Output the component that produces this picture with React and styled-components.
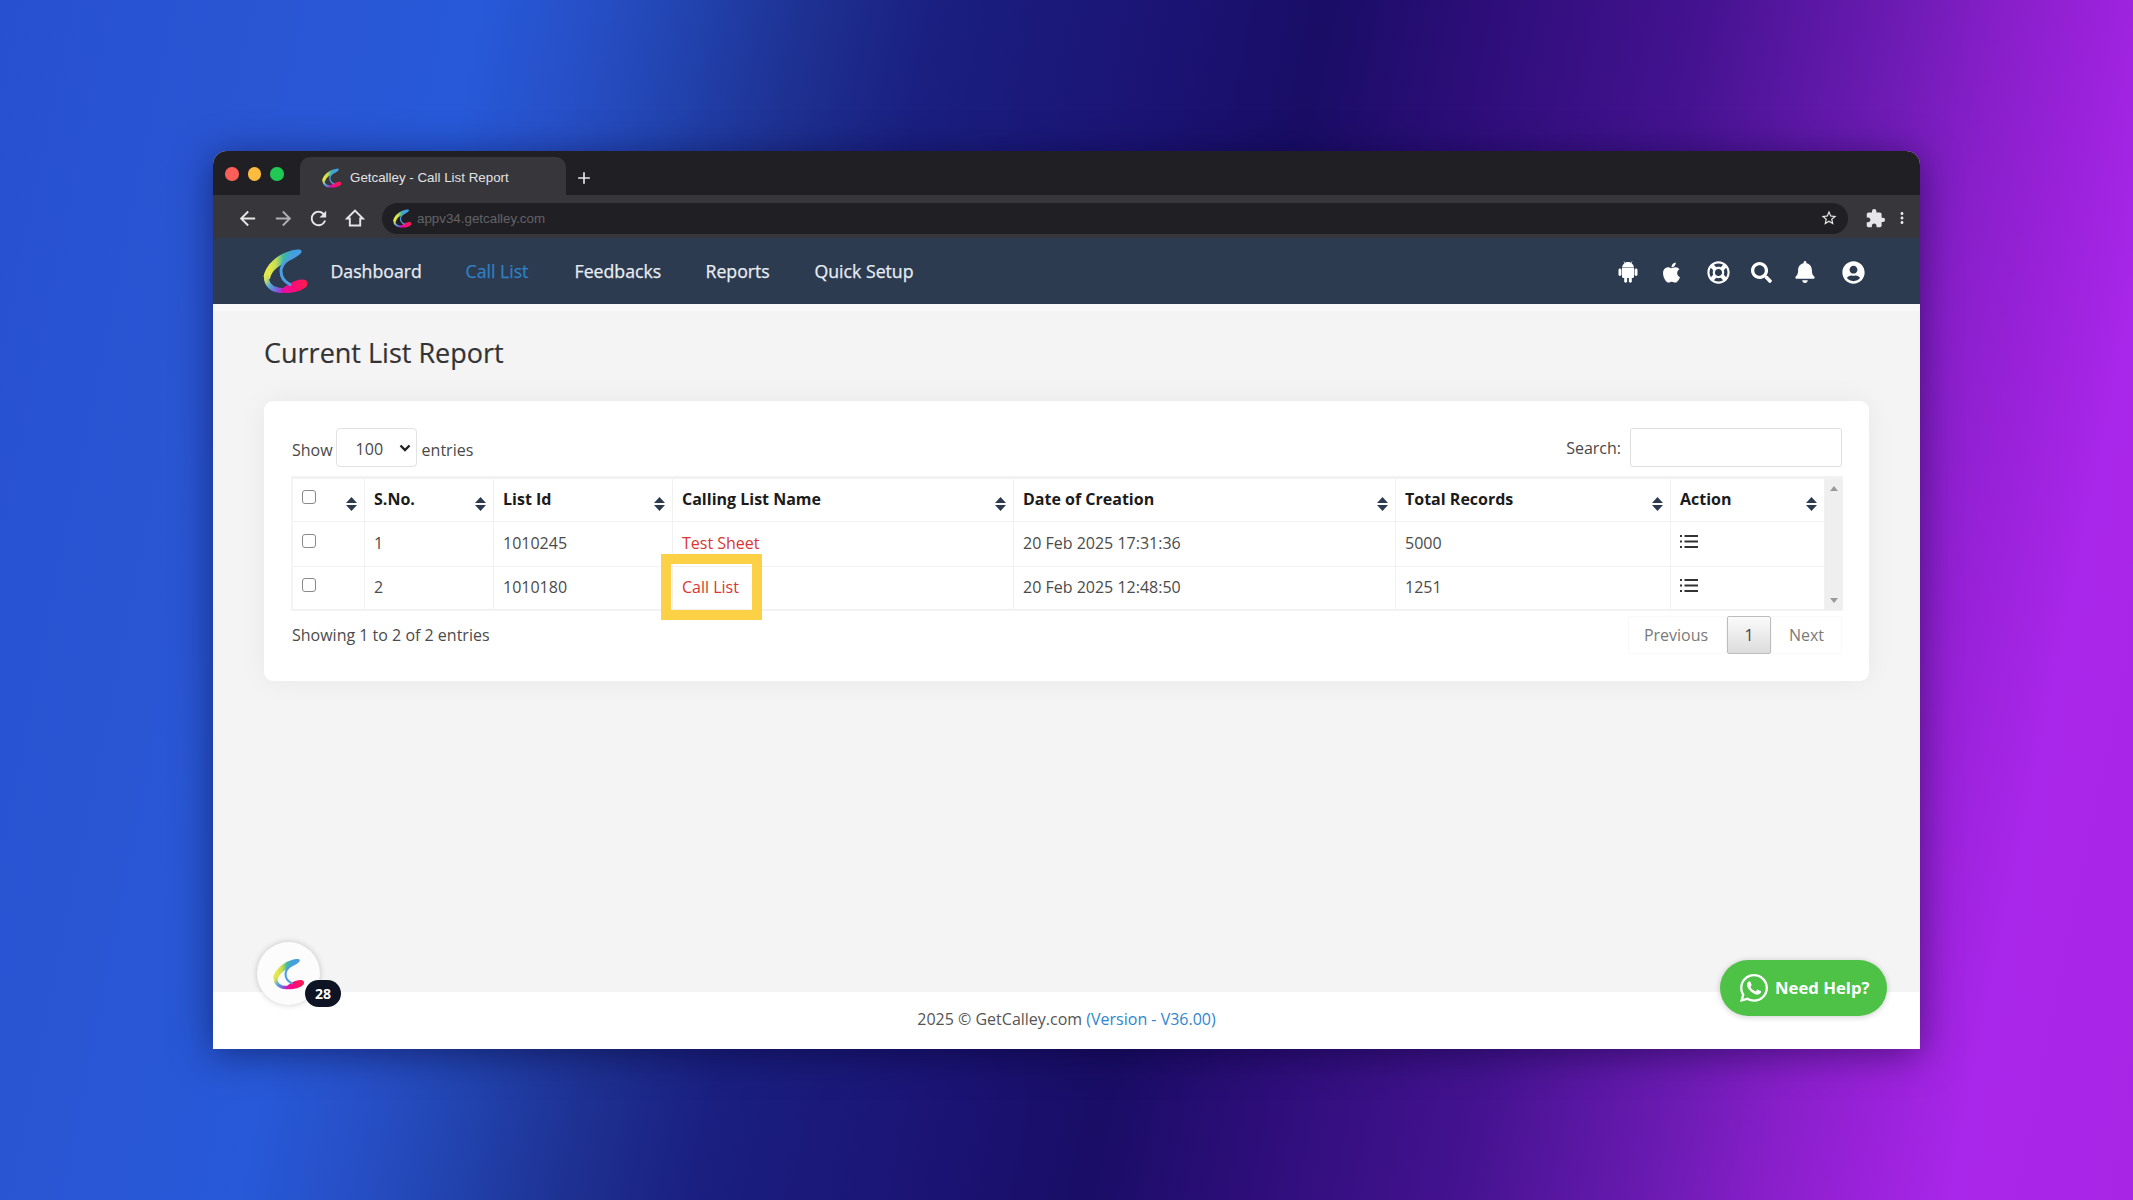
import React from "react";
import styled, { createGlobalStyle } from "styled-components";
import { FaApple, FaSearch, FaBell, FaUserCircle, FaRegLifeRing, FaWhatsapp } from "react-icons/fa";
import { MdArrowBack, MdArrowForward, MdRefresh, MdStarBorder, MdMoreVert, MdExtension, MdAdd } from "react-icons/md";

const Global = createGlobalStyle`
  *, *::before, *::after { box-sizing: border-box; }
  html, body { margin: 0; }
  body { font-family: "Open Sans", "Noto Sans", sans-serif; font-size: 16px; color: #555; }
`;

const Backdrop = styled.div`
  width: 2133px;
  height: 1200px;
  padding: 151px 213px 0 213px;
  overflow: hidden;
  background: linear-gradient(101.5deg, #2650cf 0%, #2a56d4 12%, #2759d8 20.3%, #2750c8 24.5%, #2244b0 28.8%, #1e3192 34%, #1a1f80 39.5%, #1b1475 48.7%, #190d66 55.8%, #2e0e7a 63%, #451391 72%, #6c1bb3 80%, #881fca 84.5%, #9a22da 88.5%, #a927ea 92.5%, #a925e6 100%);
`;

const Window = styled.main`
  width: 1707px;
  height: 898px;
  display: flex;
  flex-direction: column;
  border-radius: 14px 14px 0 0;
  background: #f4f4f4;
  box-shadow: 0 5px 38px rgba(5, 0, 40, 0.5);
`;

const TabStrip = styled.header`
  height: 44px;
  flex: none;
  display: flex;
  align-items: flex-end;
  padding-left: 12px;
  background: #202024;
  border-radius: 14px 14px 0 0;
`;

const Lights = styled.div`
  display: flex;
  gap: 9px;
  width: 75px;
  padding-bottom: 14.5px;
`;

const Light = styled.i`
  width: 13.5px;
  height: 13.5px;
  border-radius: 50%;
  background: ${(p) => p.$color};
`;

const Tab = styled.div`
  width: 266px;
  height: 38px;
  padding: 4px 0 0 22px;
  display: flex;
  align-items: center;
  border-radius: 10px 10px 0 0;
  background: #36363b;
  color: #e2e2e4;
  font: 13.35px "Liberation Sans", Arial, sans-serif;
  line-height: 34px;
  svg { margin-right: 8px; }
`;

const NewTab = styled.div`
  height: 34px;
  margin-left: 8px;
  display: flex;
  align-items: center;
  color: #e8e8e8;
`;

const Toolbar = styled.div`
  height: 43px;
  flex: none;
  display: flex;
  align-items: center;
  padding: 3px 9px 0 23px;
  background: #36363b;
  color: #e6e6e8;
`;

const ToolIcon = styled.span`
  width: ${(p) => p.$w}px;
  padding-left: ${(p) => p.$pad || 0}px;
  display: flex;
  flex: none;
  align-items: center;
`;

const Address = styled.div`
  flex: 1;
  height: 31px;
  display: flex;
  align-items: center;
  padding: 0 10px 0 11px;
  border-radius: 16px;
  background: #202024;
  color: #626267;
  font: 13.35px "Liberation Sans", Arial, sans-serif;
  svg:first-child { margin-right: 5px; }
  svg:last-child { margin-left: auto; color: #e6e6e8; }
`;

const NavBar = styled.nav`
  height: 66px;
  flex: none;
  display: flex;
  align-items: center;
  padding: 0 55px 0 50px;
  background: #2c3b50;
`;

const NavLinks = styled.div`
  display: flex;
  flex: 1;
  padding: 0 0 1px 21.5px;
`;

const NavLink = styled.a`
  width: ${(p) => p.$w}px;
  white-space: nowrap;
  font-size: 17.7px;
  font-weight: 500;
  line-height: 24px;
  -webkit-text-stroke: 0.25px currentColor;
  color: ${(p) => (p.$active ? "#2f80c4" : "#e9edf3")};
`;

const NavIcons = styled.div`
  display: flex;
  align-items: center;
  color: #fff;
  padding-top: 2px;
`;

const NavIcon = styled.span`
  display: flex;
  margin-left: ${(p) => p.$gap}px;
`;

const Content = styled.section`
  flex: 1;
  padding: 24px 51px 0 51px;
  border-top: 7px solid #f8f8f8;
`;

const Title = styled.h1`
  margin: 0;
  height: 66px;
  font-size: 27px;
  line-height: 36px;
  font-weight: 500;
  -webkit-text-stroke: 0.2px currentColor;
  color: #333;
`;

const Card = styled.div`
  height: 280px;
  padding: 27px 27px 0 28px;
  border-radius: 9px;
  background: #fff;
  box-shadow: 0 0 28px rgba(0, 0, 0, 0.055);
`;

const Controls = styled.div`
  height: 48px;
  display: flex;
  justify-content: space-between;
  align-items: flex-start;
`;

const Label = styled.label`
  height: 39px;
  display: flex;
  align-items: center;
  font-size: 16px;
  color: #484848;
`;

const LengthSelect = styled.span`
  width: 81px;
  height: 39px;
  margin: 0 5px 0 3px;
  padding: 3px 5px 0 19px;
  display: flex;
  align-items: center;
  justify-content: space-between;
  border: 1.5px solid #e2e2e2;
  border-radius: 4px;
  svg { margin-bottom: 3px; }
`;

const Drop = styled.span`
  padding-top: 4px;
`;

const SearchInput = styled.input`
  width: 212px;
  height: 39px;
  margin-left: 9px;
  border: 1.5px solid #dedede;
  border-radius: 3px;
  background: #fff;
`;

const TableFrame = styled.div`
  display: flex;
  width: 1552px;
  height: 135px;
  margin: 0 0 1px -1px;
  border-top: 3px solid #f2f2f2;
  border-left: 2px solid #f4f4f4;
  border-bottom: 1px solid #f3f3f3;
`;

const Grid = styled.div`
  flex: 1;
  display: grid;
  grid-template-columns: 72px 129px 179px 341px 382px 275px 1fr;
  grid-template-rows: 43px 45px 43px;
`;

const Cell = styled.div`
  position: relative;
  display: flex;
  align-items: center;
  padding: 0 12px 3px 9px;
  border-right: 1px solid #f1f1f1;
  border-bottom: 1px solid #f1f1f1;
  color: ${(p) => (p.$link ? "#dc3532" : "#4b4b4b")};
`;

const HeadCell = styled(Cell)`
  justify-content: space-between;
  padding: 0 7px 2px 9px;
  font-weight: 700;
  color: #1b1b1b;
  svg { margin-top: 10px; }
`;

const ActionCell = styled(Cell)`
  padding-bottom: 6px;
`;

const Check = styled.span`
  width: 14px;
  height: 14px;
  margin-bottom: 4px;
  border: 1.5px solid #8a8a8a;
  border-radius: 3px;
  background: #fff;
`;

const Highlight = styled.span`
  position: absolute;
  left: -12px;
  top: -13px;
  width: 101px;
  height: 66px;
  border: 10.5px solid #fdd145;
`;

const Scroll = styled.div`
  width: 18px;
  display: flex;
  flex-direction: column;
  align-items: center;
  justify-content: space-between;
  padding: 7px 0;
  background: #efefef;
`;

const Footing = styled.div`
  height: 42px;
  display: flex;
  justify-content: space-between;
  align-items: center;
  padding-top: 4px;
  color: #4b4b4b;
`;

const Pager = styled.div`
  display: flex;
  height: 38px;
`;

const PageButton = styled.span`
  width: ${(p) => p.$w}px;
  padding-right: ${(p) => p.$pr || 0}px;
  display: flex;
  align-items: center;
  justify-content: center;
  border: 1.5px solid ${(p) => (p.$on ? "#bdbdbd" : "#f9f9f9")};
  border-radius: 2px;
  background: ${(p) => (p.$on ? "linear-gradient(#fbfbfb, #dcdcdc)" : "#fff")};
  color: ${(p) => (p.$on ? "#444" : "#7a7a7a")};
`;

const PageFooter = styled.footer`
  position: relative;
  height: 57px;
  flex: none;
  display: flex;
  justify-content: center;
  padding-top: 15px;
  line-height: 24px;
  font-size: 16px;
  white-space: pre;
  color: #555;
  background: #fff;
`;

const Version = styled.a`
  color: #2f86cf;
`;

const ChatBubble = styled.div`
  position: absolute;
  left: 44px;
  top: -50px;
  width: 63px;
  height: 63px;
  display: flex;
  align-items: center;
  justify-content: center;
  border-radius: 50%;
  background: #fcfcfc;
  box-shadow: 0 0 6px rgba(0, 0, 0, 0.2);
`;

const Count = styled.span`
  position: absolute;
  left: 48px;
  top: 38px;
  width: 36px;
  height: 27px;
  border-radius: 14px;
  background: #0e1424;
  color: #fff;
  font: 700 14px "Open Sans", sans-serif;
  line-height: 27px;
  text-align: center;
`;

const HelpButton = styled.div`
  position: absolute;
  right: 33px;
  top: -32px;
  width: 167px;
  height: 56px;
  display: flex;
  align-items: center;
  padding: 0 0 1px 18px;
  gap: 5px;
  border-radius: 28px;
  background: #4dc247;
  color: #fff;
  font-size: 16.7px;
  font-weight: 700;
  box-shadow: 0 1px 6px rgba(0, 0, 0, 0.2);
`;

function Logo({ size }) {
  const id = "calley" + size;
  return (
    <svg width={size} height={size} viewBox="0 0 46 46" fill="none" strokeLinecap="round">
      <defs>
        <linearGradient id={id} x1="6" y1="14" x2="30" y2="14" gradientUnits="userSpaceOnUse">
          <stop offset="0" stopColor="#e6e84a" />
          <stop offset=".3" stopColor="#c2dc55" />
          <stop offset=".6" stopColor="#3fb7a8" />
          <stop offset="1" stopColor="#3f9ee2" />
        </linearGradient>
        <linearGradient id={id + "b"} x1="3" y1="30" x2="22" y2="43" gradientUnits="userSpaceOnUse">
          <stop offset="0" stopColor="#dfe452" />
          <stop offset=".35" stopColor="#4fa6e0" />
          <stop offset=".75" stopColor="#8a4fd8" />
          <stop offset="1" stopColor="#e012b0" />
        </linearGradient>
        <linearGradient id={id + "c"} x1="16" y1="40" x2="42" y2="36" gradientUnits="userSpaceOnUse">
          <stop offset="0" stopColor="#d414b8" />
          <stop offset=".5" stopColor="#fb0a7c" />
          <stop offset="1" stopColor="#ff1a52" />
        </linearGradient>
      </defs>
      <path d="M34 1.500C18 3 2 16 0.500 29L7 31C8 25 12 20 20 16C27 12 35 9 38 5C40 2 37 1 34 1.500Z" fill={`url(#${id})`} />
      <path d="M3.500 29C3 37 10 42.500 19 42.500" stroke={`url(#${id}b)`} strokeWidth="5" />
      <path d="M18 42C24 36 32 32 39 31.500C44 31 46 35 43.500 38.500C38 44 26 46 18 44.500Z" fill={`url(#${id}c)`} />
      <path d="M36 4.500C26 10 18 15 18 23C18 29 22 34 27 36.500" stroke="#4b9fe0" strokeWidth="3" />
    </svg>
  );
}

const HomeIcon = () => (
  <svg width="20" height="20" viewBox="0 0 20 20" fill="none" stroke="#e6e6e8" strokeWidth="1.9">
    <path d="M2 10.500L10 2.500L18 10.500H15.200V17.500H4.800V10.500Z" />
  </svg>
);

const AndroidIcon = () => (
  <svg width="20" height="22" viewBox="0 0 20 22" fill="#fff">
    <path d="M4 6.500C4.300 3.500 6.800 1 10 1S15.700 3.500 16 6.500Z" />
    <path d="M4 7.100H16V15.500Q16 17 14.500 17H5.500Q4 17 4 15.500Z" />
    <rect x="0.500" y="7.500" width="2.900" height="7.500" rx="1.450" />
    <rect x="16.600" y="7.500" width="2.900" height="7.500" rx="1.450" />
    <rect x="6.200" y="15" width="2.900" height="6.700" rx="1.450" />
    <rect x="10.900" y="15" width="2.900" height="6.700" rx="1.450" />
    <path d="M6 0.500L7.300 2.600M14 0.500L12.700 2.600" stroke="#fff" strokeWidth=".8" />
  </svg>
);

const Sorter = () => (
  <svg width="11" height="14" viewBox="0 0 11 14" fill="#2c3b50">
    <path d="M5.500 0L11 6H0Z M0 8H11L5.500 14Z" />
  </svg>
);

const ListIcon = () => (
  <svg width="18" height="15" viewBox="0 0 18 15" fill="#333">
    <path d="M0 1h2v2H0zM0 6.500h2v2H0zM0 12h2v2H0zM4.500 1H18v2H4.500zM4.500 6.500H18v2H4.500zM4.500 12H18v2H4.500z" />
  </svg>
);

const Arrow = ({ down }) => (
  <svg width="8" height="5" viewBox="0 0 8 5" fill="#9a9a9a">
    <path d={down ? "M0 0H8L4 5Z" : "M0 5H8L4 0Z"} />
  </svg>
);

const Chevron = () => (
  <svg width="12" height="8" viewBox="0 0 12 8" fill="none" stroke="#222" strokeWidth="2.4">
    <path d="M1.500 1.500L6 6L10.500 1.500" />
  </svg>
);

const links = [["Dashboard", 135], ["Call List", 109], ["Feedbacks", 131], ["Reports", 109], ["Quick Setup", 110]];
const heads = ["S.No.", "List Id", "Calling List Name", "Date of Creation", "Total Records", "Action"];
const rows = [
  { no: "1", id: "1010245", name: "Test Sheet", date: "20 Feb 2025 17:31:36", total: "5000" },
  { no: "2", id: "1010180", name: "Call List", date: "20 Feb 2025 12:48:50", total: "1251", marked: true },
];

export default function App() {
  return (
    <Backdrop>
      <Global />
      <Window>
        <TabStrip>
          <Lights>
            <Light $color="#fb5f57" />
            <Light $color="#fdbc40" />
            <Light $color="#1fc953" />
          </Lights>
          <Tab><Logo size={20} />Getcalley - Call List Report</Tab>
          <NewTab><MdAdd size={20} /></NewTab>
        </TabStrip>
        <Toolbar>
          <ToolIcon $w={36}><MdArrowBack size={23} /></ToolIcon>
          <ToolIcon $w={35}><MdArrowForward size={23} color="#b0b0b4" /></ToolIcon>
          <ToolIcon $w={36}><MdRefresh size={23} /></ToolIcon>
          <ToolIcon $w={39} $pad={2}><HomeIcon /></ToolIcon>
          <Address><Logo size={19} />appv34.getcalley.com<MdStarBorder size={18} /></Address>
          <ToolIcon $w={45} $pad={17}><MdExtension size={21} /></ToolIcon>
          <ToolIcon $w={18}><MdMoreVert size={22} /></ToolIcon>
        </Toolbar>
        <NavBar>
          <Logo size={46} />
          <NavLinks>
            {links.map(([t, w]) => <NavLink key={t} $w={w} $active={t === "Call List"}>{t}</NavLink>)}
          </NavLinks>
          <NavIcons>
            <NavIcon $gap={0}><AndroidIcon /></NavIcon>
            <NavIcon $gap={22}><FaApple size={23} /></NavIcon>
            <NavIcon $gap={24}><FaRegLifeRing size={23} /></NavIcon>
            <NavIcon $gap={21}><FaSearch size={21} /></NavIcon>
            <NavIcon $gap={22}><FaBell size={22} /></NavIcon>
            <NavIcon $gap={26}><FaUserCircle size={23} /></NavIcon>
          </NavIcons>
        </NavBar>
        <Content>
          <Title>Current List Report</Title>
          <Card>
            <Controls>
              <Label>
                <Drop>Show</Drop>
                <LengthSelect>100<Chevron /></LengthSelect>
                <Drop>entries</Drop>
              </Label>
              <Label>Search:<SearchInput /></Label>
            </Controls>
            <TableFrame>
              <Grid>
                <HeadCell><Check /><Sorter /></HeadCell>
                {heads.map((h) => <HeadCell key={h}>{h}<Sorter /></HeadCell>)}
                {rows.map((r) => (
                  <React.Fragment key={r.id}>
                    <Cell><Check /></Cell>
                    <Cell>{r.no}</Cell>
                    <Cell>{r.id}</Cell>
                    <Cell $link>{r.name}{r.marked && <Highlight />}</Cell>
                    <Cell>{r.date}</Cell>
                    <Cell>{r.total}</Cell>
                    <ActionCell><ListIcon /></ActionCell>
                  </React.Fragment>
                ))}
              </Grid>
              <Scroll><Arrow /><Arrow down /></Scroll>
            </TableFrame>
            <Footing>
              <span>Showing 1 to 2 of 2 entries</span>
              <Pager>
                <PageButton $w={99} $pr={3}>Previous</PageButton>
                <PageButton $w={44} $on>1</PageButton>
                <PageButton $w={71}>Next</PageButton>
              </Pager>
            </Footing>
          </Card>
        </Content>
        <PageFooter>
          2025 © GetCalley.com <Version>(Version - V36.00)</Version>
          <ChatBubble><Logo size={32} /><Count>28</Count></ChatBubble>
          <HelpButton><FaWhatsapp size={32} />Need Help?</HelpButton>
        </PageFooter>
      </Window>
    </Backdrop>
  );
}
